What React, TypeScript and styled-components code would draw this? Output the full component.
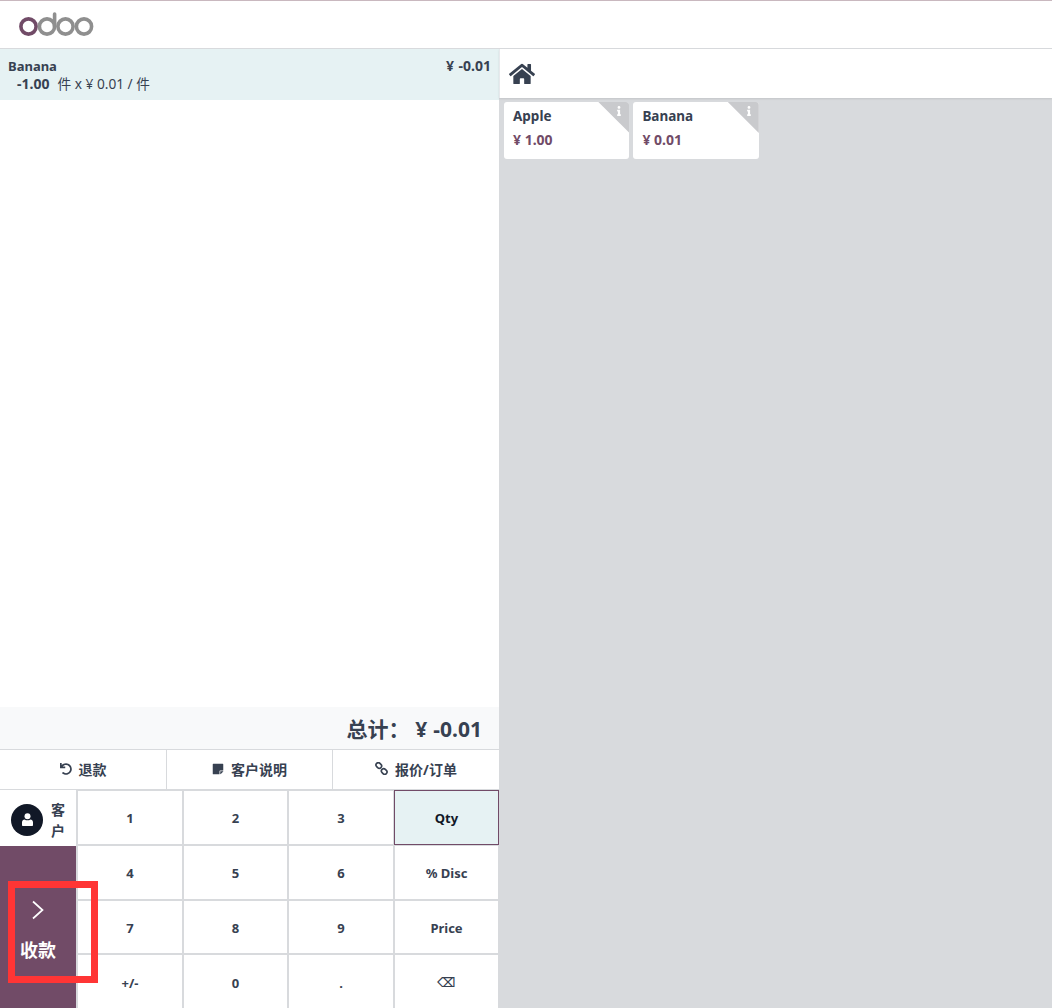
import { createGlobalStyle, styled } from "styled-components";
import { FaHome, FaInfo, FaStickyNote, FaUndo } from "react-icons/fa";

const GlobalStyle = createGlobalStyle`
  html, body {
    margin: 0;
    padding: 0;
    background: #fff;
  }
  body {
    font-family: "Noto Sans", "Noto Sans CJK SC", sans-serif;
    color: #374151;
    font-size: 13px;
  }
  * {
    box-sizing: border-box;
  }
`;

const keys = [
  "1", "2", "3", "Qty",
  "4", "5", "6", "% Disc",
  "7", "8", "9", "Price",
  "+/-", "0", ".", "⌫",
];

const products = [
  { name: "Apple", price: "¥ 1.00" },
  { name: "Banana", price: "¥ 0.01" },
];

function Logo() {
  return (
    <svg width="76" height="24" viewBox="0 0 76 24" fill="none">
      <circle cx="9.5" cy="14.5" r="7.6" stroke="#714B67" strokeWidth="3.6" />
      <circle cx="28" cy="14.5" r="7.6" stroke="#8F8F8F" strokeWidth="3.6" />
      <path d="M35.6 2v12.5" stroke="#8F8F8F" strokeWidth="3.6" strokeLinecap="round" />
      <circle cx="46.5" cy="14.5" r="7.6" stroke="#8F8F8F" strokeWidth="3.6" />
      <circle cx="65" cy="14.5" r="7.6" stroke="#8F8F8F" strokeWidth="3.6" />
    </svg>
  );
}

function LinkIcon() {
  return (
    <svg width="13" height="13" viewBox="0 0 13 13" fill="none" stroke="#374151" strokeWidth="1.6">
      <rect x="0.8" y="1.2" width="6" height="4.6" rx="2.3" transform="rotate(45 3.8 3.5)" />
      <rect x="6.2" y="7.2" width="6" height="4.6" rx="2.3" transform="rotate(45 9.2 9.5)" />
    </svg>
  );
}

function UserIcon() {
  return (
    <svg width="11" height="13" viewBox="0 0 11 13" fill="#fff">
      <circle cx="5.5" cy="3.2" r="3" />
      <path d="M0 12V9.2C0 7.6 1.2 6.6 2.6 6.4 3.4 7 4.4 7.3 5.5 7.3S7.6 7 8.4 6.4C9.8 6.6 11 7.6 11 9.2V12C11 12.6 10.6 13 10 13H1C.4 13 0 12.6 0 12Z" />
    </svg>
  );
}

export default function App() {
  return (
    <Screen>
      <GlobalStyle />
      <Header>
        <Logo />
      </Header>
      <Main>
        <LeftPane>
          <OrderList>
            <OrderLine>
              <LineTop>
                <span>Banana</span>
                <LinePrice>¥ -0.01</LinePrice>
              </LineTop>
              <LineDetail>
                <strong>-1.00</strong>
                <span>件 x ¥ 0.01 / 件</span>
              </LineDetail>
            </OrderLine>
          </OrderList>
          <Total>总计： ¥ -0.01</Total>
          <Actions>
            <ActionButton>
              <UndoIcon />
              退款
            </ActionButton>
            <ActionButton>
              <FaStickyNote size={12} />
              客户说明
            </ActionButton>
            <ActionButton>
              <LinkIcon />
              报价/订单
            </ActionButton>
          </Actions>
          <PadArea>
            <SideColumn>
              <CustomerButton>
                <Avatar>
                  <UserIcon />
                </Avatar>
                <CustomerLabel>客户</CustomerLabel>
              </CustomerButton>
              <PayButton>
                <svg width="14" height="20" viewBox="0 0 14 20" fill="none" stroke="#fff" strokeWidth="1.7">
                  <path d="M2 1.5 11.5 10 2 18.5" />
                </svg>
                <span>收款</span>
              </PayButton>
            </SideColumn>
            <Numpad>
              {keys.map((key) => (
                <Key key={key} $active={key === "Qty"} $glyph={key === "⌫"}>
                  {key}
                </Key>
              ))}
            </Numpad>
          </PadArea>
        </LeftPane>
        <RightPane>
          <CategoryBar>
            <FaHome size={26} color="#374151" />
          </CategoryBar>
          <ProductGrid>
            {products.map((product) => (
              <ProductCard key={product.name}>
                <InfoCorner>
                  <InfoMark>
                    <FaInfo size={10} color="#fff" />
                  </InfoMark>
                </InfoCorner>
                <ProductName>{product.name}</ProductName>
                <ProductPrice>{product.price}</ProductPrice>
              </ProductCard>
            ))}
          </ProductGrid>
        </RightPane>
      </Main>
      <Annotation />
    </Screen>
  );
}

const Screen = styled.div`
  position: relative;
  display: flex;
  flex-direction: column;
  width: 1052px;
  height: 1008px;
  overflow: hidden;
`;

const Header = styled.header`
  display: flex;
  align-items: center;
  height: 49px;
  padding: 0 0 1px 19px;
  background: #fff;
  border-top: 1px solid #c9b8bf;
  border-bottom: 1px solid #d8dadd;
`;

const Main = styled.div`
  display: flex;
  flex: 1;
  min-height: 0;
`;

const LeftPane = styled.section`
  display: flex;
  flex-direction: column;
  width: 499px;
  background: #fff;
`;

const OrderList = styled.div`
  flex: 1;
  min-height: 0;
`;

const OrderLine = styled.div`
  height: 51px;
  padding: 8px 8px 0;
  background: #e6f2f3;
  line-height: 18px;
`;

const LineTop = styled.div`
  display: flex;
  justify-content: space-between;
  font-weight: 700;
  font-size: 13px;
`;

const LinePrice = styled.span`
  font-size: 14px;
  word-spacing: 1px;
`;

const LineDetail = styled.div`
  display: flex;
  gap: 8px;
  padding-left: 9px;
  font-size: 13.7px;

  strong {
    font-size: 14px;
  }
`;

const Total = styled.div`
  height: 43px;
  padding: 9px 17px 0 0;
  text-align: right;
  background: #f8f9fa;
  border-bottom: 1px solid #d8dadd;
  font-size: 21px;
  font-weight: 700;
  line-height: 27px;
  word-spacing: 0.5px;
`;

const Actions = styled.div`
  display: grid;
  grid-template-columns: 166px 166px 167px;
  height: 39px;
`;

const ActionButton = styled.div`
  display: flex;
  align-items: center;
  justify-content: center;
  gap: 7px;
  padding-bottom: 2px;
  font-weight: 700;
  font-size: 14px;

  & + & {
    border-left: 1px solid #d8dadd;
  }
`;

const UndoIcon = styled(FaUndo)`
  width: 12px;
  height: 12px;
`;

const PadArea = styled.div`
  display: flex;
  height: 219px;
  background: #d8dadd;
`;

const SideColumn = styled.div`
  display: flex;
  flex-direction: column;
  flex: none;
  width: 76px;
`;

const CustomerButton = styled.div`
  display: flex;
  align-items: center;
  gap: 8px;
  height: 57px;
  padding: 3px 8px 0 11px;
  background: #fff;
  border-top: 1px solid #d8dadd;
`;

const Avatar = styled.div`
  display: flex;
  align-items: center;
  justify-content: center;
  flex: none;
  width: 32px;
  height: 32px;
  border-radius: 50%;
  background: #111827;
`;

const CustomerLabel = styled.span`
  width: 14px;
  font-weight: 700;
  font-size: 14px;
  line-height: 21px;
`;

const PayButton = styled.div`
  display: flex;
  flex: 1;
  flex-direction: column;
  align-items: center;
  justify-content: center;
  gap: 16px;
  padding-top: 7px;
  background: #714b67;
  color: #fff;
  font-size: 18px;
  font-weight: 700;
`;

const Numpad = styled.div`
  display: grid;
  flex: 1;
  grid-template-columns: 104px 103px 104px 103px;
  grid-template-rows: repeat(4, 1fr);
  gap: 2px;
  padding: 2px 0 0 2px;
`;

const Key = styled.div<{ $active?: boolean; $glyph?: boolean }>`
  display: flex;
  align-items: center;
  justify-content: center;
  padding-top: 2px;
  background: ${(props) => (props.$active ? "#e6f2f3" : "#fff")};
  border: ${(props) => (props.$active ? "1px solid #714b67" : "none")};
  margin: ${(props) => (props.$active ? "-1px" : "0")};
  color: ${(props) => (props.$active ? "#111827" : "#374151")};
  font-family: ${(props) => (props.$glyph ? '"DejaVu Sans", sans-serif' : "inherit")};
  font-size: 13px;
  font-weight: 700;
`;

const RightPane = styled.section`
  display: flex;
  flex: 1;
  flex-direction: column;
  background: #d8dadd;
`;

const CategoryBar = styled.div`
  display: flex;
  align-items: center;
  height: 49px;
  padding-left: 9px;
  background: #fff;
  border-left: 1px solid #e7e9ec;
  box-shadow: 0 1px 2px rgba(0, 0, 0, 0.1);
`;

const ProductGrid = styled.div`
  display: flex;
  gap: 4px;
  padding: 4px 5px;
`;

const ProductCard = styled.div`
  position: relative;
  width: 125.4px;
  height: 57px;
  padding: 5px 9px;
  overflow: hidden;
  background: #fff;
  border-radius: 3px;
`;

const InfoCorner = styled.div`
  position: absolute;
  top: 0;
  right: 0;
  width: 31px;
  height: 31px;
  background: #c9cacd;
  clip-path: polygon(0 0, 100% 0, 100% 100%);
`;

const InfoMark = styled.span`
  position: absolute;
  top: 4px;
  right: 5px;
  display: flex;
`;

const ProductName = styled.div`
  font-size: 13.5px;
  font-weight: 700;
  line-height: 18px;
`;

const ProductPrice = styled.div`
  margin-top: 6px;
  color: #714b67;
  font-size: 14px;
  font-weight: 700;
  line-height: 18px;
`;

const Annotation = styled.div`
  position: absolute;
  left: 8px;
  top: 881px;
  width: 90px;
  height: 102px;
  border: 7px solid #ff3535;
`;
